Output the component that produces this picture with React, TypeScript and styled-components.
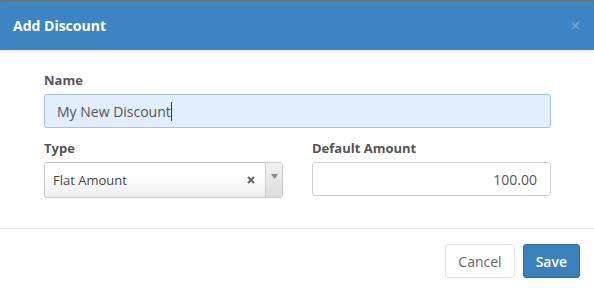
import React from "react";
import styled, { createGlobalStyle } from "styled-components";

const Global = createGlobalStyle`
  html, body { margin: 0; padding: 0; background: #fff; }
  body { font-family: "Open Sans", "Liberation Sans", sans-serif; }
  * { box-sizing: border-box; }
`;

const Modal = styled.div`
  width: 594px;
  height: 291px;
  background: #fff;
  border-top: 1px solid #6b7682;
  display: flex;
  flex-direction: column;
`;

const Header = styled.div`
  height: 49px;
  background: #3d85c1;
  display: flex;
  align-items: center;
  justify-content: space-between;
  padding: 0 14px 0 13px;
  box-shadow: 0 1px 3px rgba(0, 0, 0, 0.12);
  position: relative;
  z-index: 1;
`;

const Title = styled.h4`
  margin: 0;
  color: #fff;
  font-size: 14px;
  font-weight: 700;
`;

const Close = styled.button`
  border: 0;
  background: transparent;
  padding: 0;
  width: 10px;
  height: 10px;
  display: flex;
  align-items: center;
  justify-content: center;
  cursor: pointer;
`;

const Body = styled.div`
  padding: 21px 43px 30px 44px;
  display: flex;
  flex-direction: column;
  gap: 11px;
`;

const Row = styled.div<{ $cols?: number }>`
  display: grid;
  grid-template-columns: repeat(${(p) => p.$cols ?? 1}, 1fr);
  column-gap: 29px;
`;

const Field = styled.div`
  display: flex;
  flex-direction: column;
`;

const Label = styled.label`
  font-size: 13px;
  font-weight: 700;
  color: #555;
  line-height: 18px;
  margin-bottom: 5px;
`;

const Input = styled.div<{ $focus?: boolean; $align?: string }>`
  height: 34px;
  border: 1px solid ${(p) => (p.$focus ? "#9fc4e6" : "#cfcfcf")};
  background: ${(p) => (p.$focus ? "#e1eefb" : "#fff")};
  border-radius: 3px;
  display: flex;
  align-items: center;
  justify-content: ${(p) => (p.$align === "right" ? "flex-end" : "flex-start")};
  padding: 0 13px 0 12px;
  font-size: 14px;
  color: #555;
`;

const Caret = styled.span`
  display: inline-block;
  width: 1px;
  height: 19px;
  background: #333;
`;

const Select = styled.div`
  height: 36px;
  border: 1px solid #c8c8c8;
  border-radius: 3px;
  background: linear-gradient(#ffffff 40%, #eeeeee);
  display: flex;
  align-items: stretch;
  overflow: hidden;
`;

const SelectValue = styled.div`
  flex: 1;
  display: flex;
  align-items: center;
  padding-left: 8px;
  font-size: 13px;
  color: #444;
`;

const Clear = styled.div`
  width: 20px;
  display: flex;
  align-items: center;
  justify-content: center;
  margin-right: 4px;
`;

const ArrowBox = styled.div`
  width: 17px;
  border-left: 1px solid #cfcfcf;
  background: linear-gradient(#f2f2f2, #dcdcdc);
  display: flex;
  justify-content: center;
  padding-top: 11px;
`;

const Footer = styled.div`
  border-top: 1px solid #e5e5e5;
  flex: 1;
  display: flex;
  justify-content: flex-end;
  align-items: flex-start;
  gap: 8px;
  padding: 15px 14px 0 0;
`;

const Button = styled.button<{ $primary?: boolean }>`
  height: 34px;
  padding: 0 12px;
  border-radius: 3px;
  font-family: "Open Sans", "Liberation Sans", sans-serif;
  font-size: 14px;
  font-weight: ${(p) => (p.$primary ? 600 : 400)};
  border: 1px solid ${(p) => (p.$primary ? "#2f6ea5" : "#e3e3e3")};
  background: ${(p) => (p.$primary ? "#3a80bd" : "#fff")};
  color: ${(p) => (p.$primary ? "#fff" : "#666")};
  cursor: pointer;
`;

export default function App() {
  return (
    <>
      <Global />
      <Modal>
        <Header>
          <Title>Add Discount</Title>
          <Close aria-label="Close">
            <svg width="9" height="9" viewBox="0 0 9 9">
              <path d="M1 1L8 8M8 1L1 8" stroke="#7aa4cb" strokeWidth="1.6" />
            </svg>
          </Close>
        </Header>
        <Body>
          <Row>
            <Field>
              <Label>Name</Label>
              <Input $focus>
                My New Discount
                <Caret />
              </Input>
            </Field>
          </Row>
          <Row $cols={2}>
            <Field>
              <Label>Type</Label>
              <Select>
                <SelectValue>Flat Amount</SelectValue>
                <Clear>
                  <svg width="8" height="8" viewBox="0 0 8 8">
                    <path d="M1 1L7 7M7 1L1 7" stroke="#666" strokeWidth="2" />
                  </svg>
                </Clear>
                <ArrowBox>
                  <svg width="7" height="5" viewBox="0 0 7 5">
                    <path d="M0 0H7L3.5 5Z" fill="#888" />
                  </svg>
                </ArrowBox>
              </Select>
            </Field>
            <Field>
              <Label>Default Amount</Label>
              <Input $align="right">100.00</Input>
            </Field>
          </Row>
        </Body>
        <Footer>
          <Button>Cancel</Button>
          <Button $primary>Save</Button>
        </Footer>
      </Modal>
    </>
  );
}
